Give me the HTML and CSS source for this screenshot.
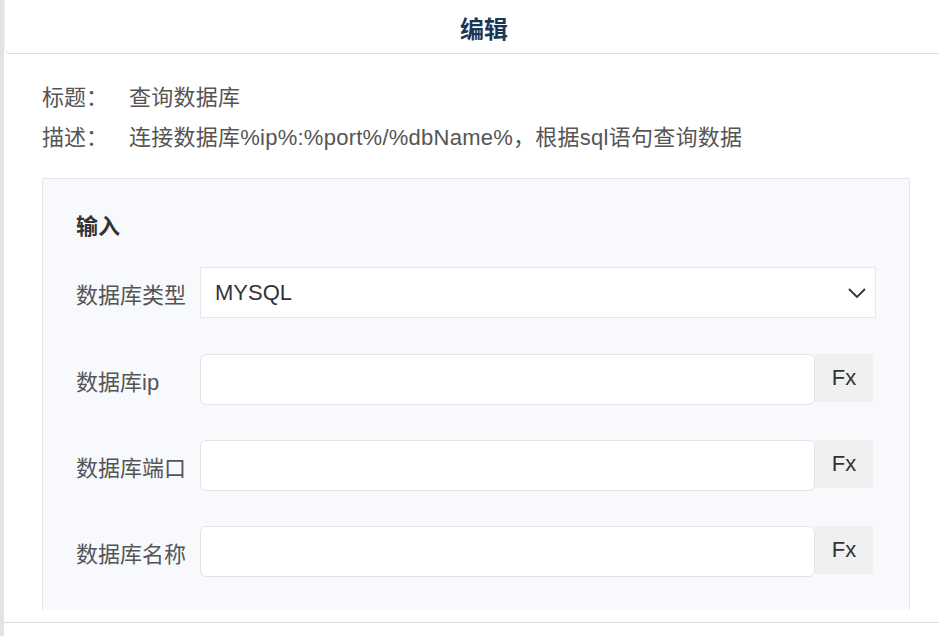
FILE: index.html
```html
<!DOCTYPE html>
<html lang="zh-CN">
  <head>
    <meta charset="UTF-8" />
    <meta name="viewport" content="width=device-width, initial-scale=1.0" />
    <title>编辑</title>
    <link rel="stylesheet" href="styles.css">
  </head>
  <body>
    <div class="dialog">
      <div class="dialog-header">编辑</div>

      <div class="dialog-body">
        <div class="info-row">
          <span class="info-label">标题：</span>
          <span class="info-value">查询数据库</span>
        </div>
        <div class="info-row">
          <span class="info-label">描述：</span>
          <span class="info-value">连接数据库%ip%:%port%/%dbName%，根据sql语句查询数据</span>
        </div>

        <div class="panel">
          <div class="panel-title">输入</div>

          <div class="form-row form-row-first">
            <label class="form-label">数据库类型</label>
            <div class="select">
              <span>MYSQL</span>
              <svg width="20" height="12" viewBox="0 0 20 12">
                <path d="M2 2 L10 10 L18 2" fill="none" stroke="#333" stroke-width="1.8" />
              </svg>
            </div>
          </div>

          <div class="form-row">
            <label class="form-label">数据库ip</label>
            <div class="input-group">
              <div class="input"></div>
              <div class="fx-btn">Fx</div>
            </div>
          </div>

          <div class="form-row">
            <label class="form-label">数据库端口</label>
            <div class="input-group">
              <div class="input"></div>
              <div class="fx-btn">Fx</div>
            </div>
          </div>

          <div class="form-row">
            <label class="form-label">数据库名称</label>
            <div class="input-group">
              <div class="input"></div>
              <div class="fx-btn">Fx</div>
            </div>
          </div>
        </div>
      </div>

      <div class="dialog-footer"></div>
    </div>
  </body>
</html>
```

FILE: styles.css
```css
html,
body {
  margin: 0;
  height: 100%;
}

body {
  font-family: "Liberation Sans", "Noto Sans CJK SC", sans-serif;
  background: #e3e3e3;
  color: #555;
  overflow: hidden;
}

.dialog {
  margin-left: 4px;
  height: 100%;
  background: #fff;
  display: flex;
  flex-direction: column;
}

.dialog-header {
  height: 54px;
  flex-shrink: 0;
  box-sizing: border-box;
  padding: 16px 0 0 24px;
  text-align: center;
  font-size: 24px;
  line-height: 28px;
  font-weight: bold;
  color: #1e3656;
  border-bottom: 1px solid #dcdcdc;
  border-left: 1px solid #f0f0f0;
  border-bottom-left-radius: 6px;
}

.dialog-body {
  height: 556px;
  flex-shrink: 0;
  box-sizing: border-box;
  overflow: hidden;
  padding: 24px 29px 0 38px;
}

.info-row {
  display: flex;
  font-size: 22px;
  line-height: 40px;
}

.info-label {
  width: 87px;
  flex-shrink: 0;
}

.info-value {
  letter-spacing: 0.25px;
}

.panel {
  margin-top: 20px;
  background: #f8f9fd;
  border: 1px solid #e6e6e6;
  padding: 35px 33px 40px 33px;
}

.panel-title {
  font-size: 22px;
  line-height: 26px;
  font-weight: bold;
  color: #333;
  margin-bottom: 27px;
}

.form-row {
  display: flex;
  align-items: center;
  margin-bottom: 35px;
}

.form-row-first {
  margin-bottom: 36px;
}

.form-label {
  width: 124px;
  flex-shrink: 0;
  font-size: 22px;
  color: #555;
}

.select {
  flex: 1;
  height: 51px;
  box-sizing: border-box;
  background: #fff;
  border: 1px solid #e8e8e8;
  display: flex;
  align-items: center;
  justify-content: space-between;
  padding: 0 8px 0 14px;
  font-size: 22px;
  color: #333;
}

.input-group {
  flex: 1;
  display: flex;
  align-items: flex-start;
  margin-right: 3px;
}

.input {
  flex: 1;
  height: 51px;
  box-sizing: border-box;
  background: #fff;
  border: 1px solid #e3e3e3;
  border-radius: 6px;
}

.fx-btn {
  width: 58px;
  height: 48px;
  background: #f0f0f0;
  color: #333;
  font-size: 22px;
  line-height: 48px;
  text-align: center;
}

.dialog-footer {
  margin-top: 12px;
  flex: 1;
  border-top: 1px solid #dcdcdc;
}
```
